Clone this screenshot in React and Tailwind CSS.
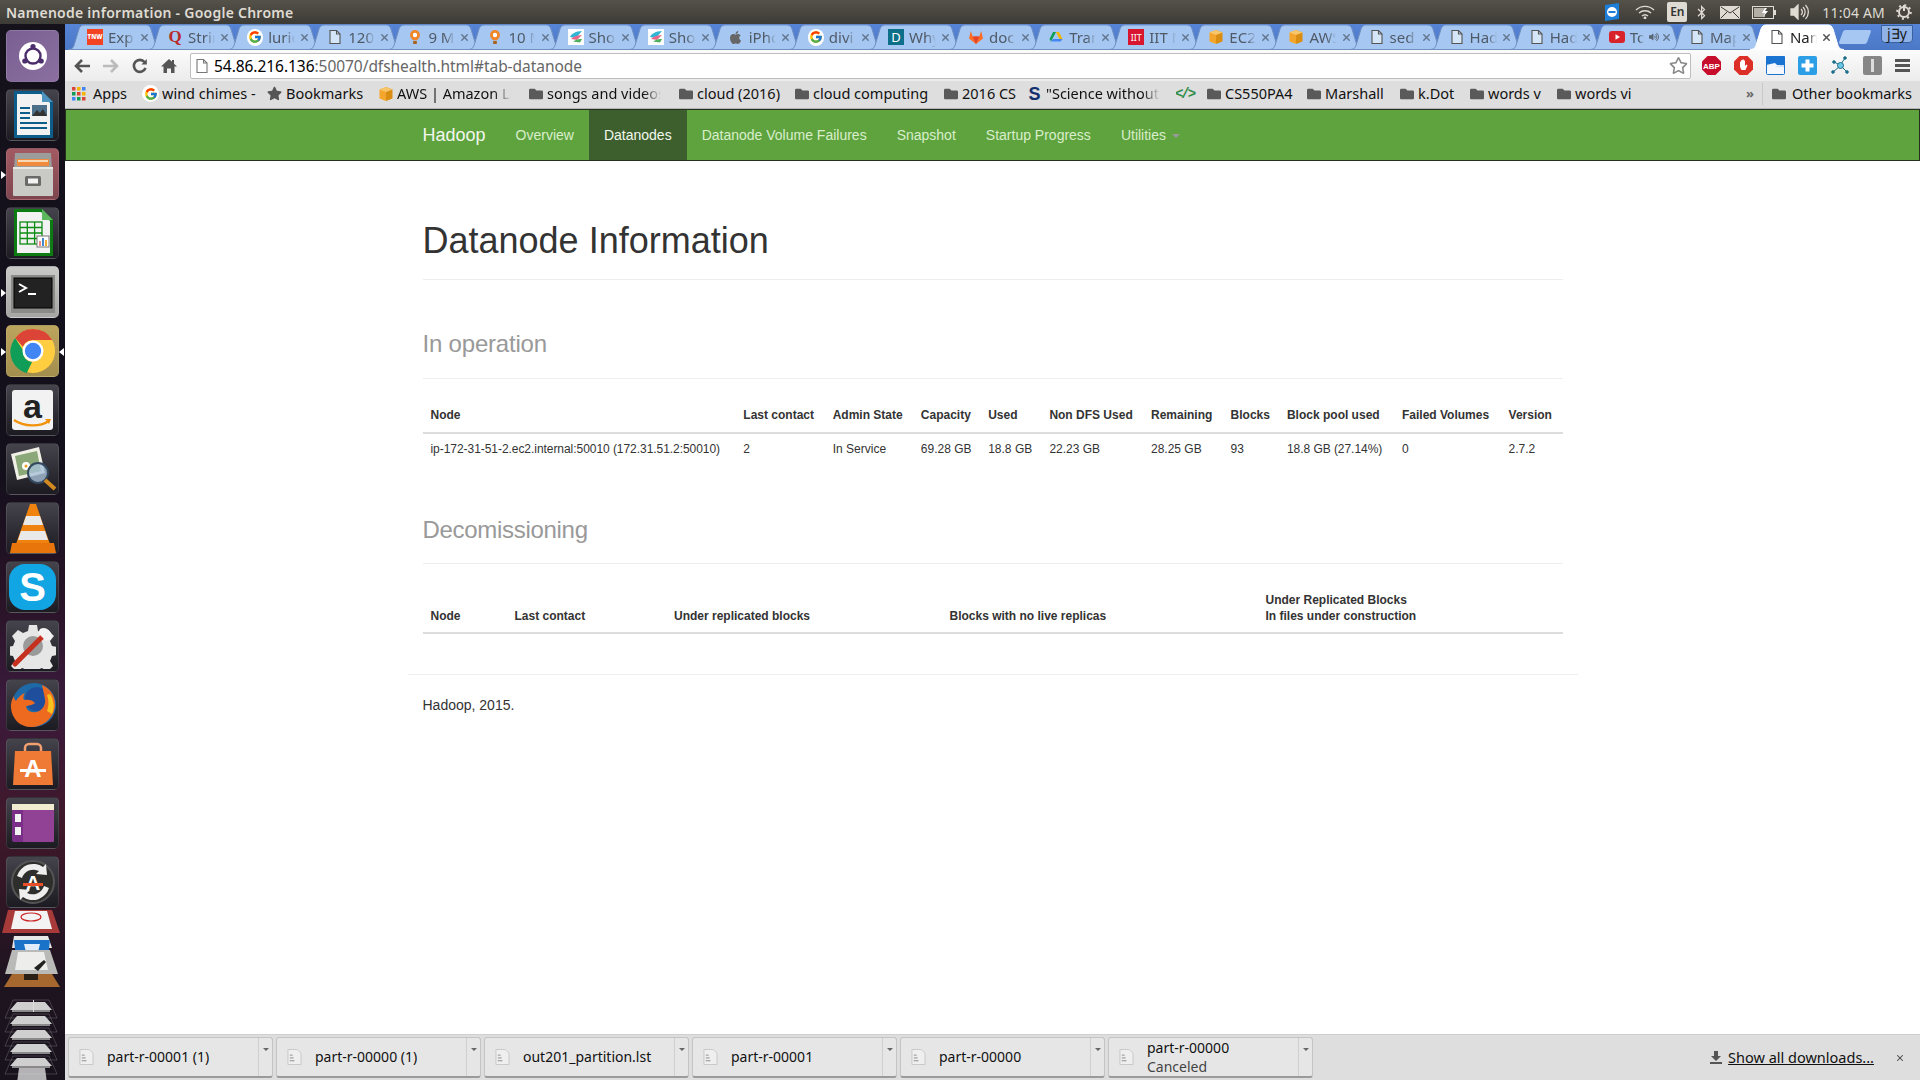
import React from "react";
import { FcGoogle } from "react-icons/fc";
import { FaApple, FaFolder, FaStar, FaRegStar, FaBluetoothB, FaVolumeUp } from "react-icons/fa";
import { X } from "lucide-react";

const Doc = ({ c = "#555" }) => (
  <svg width="16" height="16" viewBox="0 0 16 16" fill="none">
    <path d="M3 1.500h6.500L13 5v9.500H3z" fill="#fff" fillOpacity=".55" stroke={c} strokeWidth="1.100" />
    <path d="M9.500 1.500V5H13" stroke={c} strokeWidth="1.100" />
  </svg>
);
const G = () => (
  <span className="flex h-[17px] w-[17px] items-center justify-center rounded-full bg-white">
    <FcGoogle size={14} />
  </span>
);
const Pin = () => (
  <svg width="16" height="16" viewBox="0 0 16 16">
    <path d="M8 1a5 5 0 0 0-5 5c0 2.600 2 3.800 3 5.200h4C11 9.800 13 8.600 13 6a5 5 0 0 0-5-5z" fill="#f0862c" />
    <circle cx="8" cy="6" r="2.200" fill="#fff" />
    <rect x="6.200" y="12" width="3.600" height="3" fill="#a9631f" />
  </svg>
);
const Shoe = () => (
  <svg width="16" height="16" viewBox="0 0 16 16">
    <rect width="16" height="16" fill="#fff" />
    <path d="M14 2C8 2 3 5 2 8l6 1z" fill="#33b5d6" />
    <path d="M14 6C10 6 6 7 3 10l6 1z" fill="#e66a8a" />
    <path d="M14 10c-3 0-6 .5-9 2.500l7 1z" fill="#4fae5a" />
  </svg>
);
const Aws = () => (
  <svg width="16" height="16" viewBox="0 0 16 16">
    <path d="M8 1l6.500 2.500v9L8 15z" fill="#d98e13" />
    <path d="M8 1L1.500 3.500v9L8 15z" fill="#f3a62b" />
    <path d="M1.500 3.500L8 6l6.500-2.500L8 1z" fill="#f7c66a" />
  </svg>
);
const Drive = () => (
  <svg width="16" height="16" viewBox="0 0 16 16">
    <path d="M8 3l3 0 3.500 7-3 0z" fill="#f4b400" />
    <path d="M8 3L5 3 1.500 10l1.500 2.500z" fill="#0f9d58" />
    <path d="M3 12.500h9.500l2-2.500H5z" fill="#4285f4" />
  </svg>
);
const favs = {
  tnw: <span className="flex h-4 w-4 items-center justify-center bg-[#f44322] text-[6px] font-black leading-none text-white">TNW</span>,
  q: <span className="font-['Liberation_Serif',serif] text-[17px] font-bold leading-4 text-[#b92b27]">Q</span>,
  g: <G />,
  doc: <Doc />,
  pin: <Pin />,
  shoe: <Shoe />,
  apple: <FaApple size={15} color="#666" />,
  d: <span className="flex h-4 w-4 items-center justify-center bg-[#0d6f8a] text-[13px] leading-none text-white">D</span>,
  fox: (
    <svg width="16" height="16" viewBox="0 0 16 16">
      <path d="M8 15L1 9.500 2.800 2l2 5.500h6.400l2-5.500L15 9.500z" fill="#fc6d26" />
      <path d="M8 15L4.800 7.500h6.400z" fill="#e24329" />
    </svg>
  ),
  drive: <Drive />,
  iit: <span className="flex h-4 w-4 items-center justify-center bg-[#d8162f] text-[9px] leading-none text-white">IIT</span>,
  aws: <Aws />,
  yt: (
    <svg width="16" height="16" viewBox="0 0 16 16">
      <rect y="2" width="16" height="12" rx="3" fill="#d8232a" />
      <path d="M6.500 5.200v5.600L11 8z" fill="#fff" />
    </svg>
  ),
};

const tabs = [
  ["tnw", "Exp"], ["q", "Strin"], ["g", "lurio"], ["doc", "120"], ["pin", "9 M"], ["pin", "10 M"],
  ["shoe", "Sho"], ["shoe", "Sho"], ["apple", "iPho"], ["g", "divi"], ["d", "Why"], ["fox", "doc"],
  ["drive", "Tran"], ["iit", "IIT M"], ["aws", "EC2"], ["aws", "AWS"], ["doc", "sed"], ["doc", "Had"],
  ["doc", "Had"], ["yt", "To"], ["doc", "Map"],
];

const TabShape = ({ active }) => (
  <svg className="absolute -left-[7px] top-0" width="94" height="26" viewBox="0 0 94 26">
    <path
      d="M0 25.500c3 0 5-1 6-4L11 5c.8-2.500 2.500-4 5-4h62c2.500 0 4.200 1.500 5 4l5 16.500c1 3 3 4 6 4z"
      fill={active ? "#ffffff" : "#a5c7f2"}
      stroke={active ? "#ffffff" : "#6f8fc0"}
      strokeWidth="1"
    />
  </svg>
);

const Tab = ({ icon, title, active, speaker }) => (
  <div className={active ? "relative z-10 h-[26px] w-[80.100px] shrink-0" : "relative h-[26px] w-[80.100px] shrink-0"}>
    <TabShape active={active} />
    <div className="relative flex h-[26px] items-center pl-3 pr-[5px]">
      <span className="flex h-4 w-4 shrink-0 items-center justify-center">{favs[icon]}</span>
      <span
        className={
          active
            ? "ml-[5px] w-[27px] overflow-hidden whitespace-nowrap text-[15px] leading-5 text-[#222] [mask-image:linear-gradient(to_right,#000_65%,transparent)]"
            : speaker
            ? "ml-[5px] w-[14px] overflow-hidden whitespace-nowrap text-[15px] leading-5 text-[#505a66] [mask-image:linear-gradient(to_right,#000_65%,transparent)]"
            : "ml-[5px] w-[27px] overflow-hidden whitespace-nowrap text-[15px] leading-5 text-[#505a66] [mask-image:linear-gradient(to_right,#000_65%,transparent)]"
        }
      >
        {title}
      </span>
      {speaker && <FaVolumeUp size={10} color="#5a6573" className="ml-[5px] shrink-0" />}
      <span className="ml-auto flex shrink-0 items-center">
        <X size={11} strokeWidth={3.200} color={active ? "#555" : "#66788f"} />
      </span>
    </div>
  </div>
);

const bookmarks = [
  { w: "w-[124px]", icon: "g", t: "wind chimes -" },
  { w: "w-[111px]", icon: "star", t: "Bookmarks" },
  { w: "w-[150px]", icon: "aws", t: "AWS | Amazon Li", fade: true },
  { w: "w-[150px]", icon: "f", t: "songs and videos", fade: true },
  { w: "w-[116px]", icon: "f", t: "cloud (2016)" },
  { w: "w-[149px]", icon: "f", t: "cloud computing" },
  { w: "w-[84px]", icon: "f", t: "2016 CS" },
  { w: "w-[150px]", icon: "s", t: "\"Science without", fade: true },
  { w: "w-[29px]", icon: "code", t: "" },
  { w: "w-[100px]", icon: "f", t: "CS550PA4" },
  { w: "w-[93px]", icon: "f", t: "Marshall" },
  { w: "w-[70px]", icon: "f", t: "k.Dot" },
  { w: "w-[87px]", icon: "f", t: "words v" },
  { w: "w-[100px]", icon: "f", t: "words vi" },
];

const Apps = () => (
  <svg width="14" height="14" viewBox="0 0 14 14">
    {[0, 5, 10].map((y, r) =>
      [0, 5, 10].map((x, c) => (
        <rect key={`${r}${c}`} x={x} y={y} width="3.500" height="3.500"
          fill={["#db4437", "#f4b400", "#4285f4", "#0f9d58", "#db4437", "#f4b400", "#4285f4", "#0f9d58", "#db4437"][r * 3 + c]} />
      ))
    )}
  </svg>
);

const bmIcon = (k) => {
  if (k === "g") return <G />;
  if (k === "star") return <FaStar size={15} color="#555" />;
  if (k === "aws") return <Aws />;
  if (k === "f") return <FaFolder size={14} color="#5a5a5a" />;
  if (k === "s") return <span className="font-['Liberation_Sans',sans-serif] text-[18px] font-black leading-4 text-[#14306e]">S</span>;
  if (k === "code") return <span className="font-['Liberation_Mono',monospace] text-[14px] font-bold leading-4 tracking-[-2px] text-[#2e8b45]">&lt;/&gt;</span>;
  return null;
};

/* ---- launcher ---- */
const Tile = ({ bg, left, right, children }) => (
  <div className={`relative h-[52px] w-[53px] shrink-0 overflow-visible rounded-[5px] border border-white/10 ${bg}`}>
    {left && <span className="absolute -left-[6px] top-[22px] h-0 w-0 border-y-[4px] border-l-[5px] border-y-transparent border-l-white" />}
    {right && <span className="absolute -right-[6px] top-[22px] h-0 w-0 border-y-[4px] border-r-[5px] border-y-transparent border-r-white" />}
    <div className="flex h-full w-full items-center justify-center">{children}</div>
  </div>
);
const darkTile = "bg-gradient-to-b from-[#45444c] to-[#1d1b22]";

const ChromeLogo = ({ s = 46 }) => (
  <svg width={s} height={s} viewBox="0 0 48 48">
    <circle cx="24" cy="24" r="23" fill="#ffcd40" />
    <path d="M24 1a23 23 0 0 1 20 11.500H24a11.500 11.500 0 0 0-10.500 7L5.400 10.500A23 23 0 0 1 24 1z" fill="#db4437" />
    <path d="M5.400 10.500L14 24a10 10 0 0 0 9 11.500L17.500 47A23 23 0 0 1 5.400 10.500z" fill="#0f9d58" />
    <circle cx="24" cy="24" r="11" fill="#fff" />
    <circle cx="24" cy="24" r="8.500" fill="#4285f4" />
  </svg>
);

const launcher = [
  { bg: "bg-gradient-to-br from-[#7a5f92] to-[#8a6fa0]", el: (
    <svg width="40" height="40" viewBox="0 0 40 40">
      <circle cx="20" cy="20" r="14" fill="#fff" />
      <circle cx="20" cy="20" r="7.500" fill="none" stroke="#4b2e6b" strokeWidth="2.400" />
      <circle cx="20" cy="10.500" r="2.600" fill="#4b2e6b" /><circle cx="11.800" cy="25" r="2.600" fill="#4b2e6b" /><circle cx="28.200" cy="25" r="2.600" fill="#4b2e6b" />
    </svg>) },
  { bg: darkTile, el: (
    <svg width="44" height="50" viewBox="0 0 44 50">
      <path d="M3 1h28l11 11v36H3z" fill="#0d5d8a" />
      <path d="M6 4h24l9 9v32H6z" fill="#f2f2f2" />
      <path d="M31 1l11 11H31z" fill="#4d93bd" />
      <rect x="9" y="17" width="10" height="2" fill="#0d5d8a" /><rect x="9" y="22" width="10" height="2" fill="#0d5d8a" /><rect x="9" y="27" width="10" height="2" fill="#0d5d8a" />
      <rect x="21" y="15" width="15" height="11" fill="#4c6f8a" /><path d="M21 26l5-6 3 3 3-4 4 7z" fill="#333" />
      <rect x="9" y="32" width="27" height="2" fill="#0d5d8a" /><rect x="9" y="37" width="27" height="2" fill="#0d5d8a" />
    </svg>) },
  { bg: "bg-gradient-to-b from-[#a35a62] to-[#7f4650]", left: true, el: (
    <svg width="44" height="46" viewBox="0 0 44 46">
      <path d="M4 2h36l1 16H3z" fill="#9c9c9a" /><rect x="6" y="8" width="32" height="7" fill="#f08a3c" /><rect x="7" y="9" width="30" height="2" fill="#f7d9b5" />
      <rect x="2" y="16" width="40" height="29" rx="1" fill="#c9c9c6" /><rect x="2" y="16" width="40" height="2" fill="#e8e8e6" />
      <rect x="14" y="25" width="16" height="10" rx="1.500" fill="#6a6a68" /><rect x="17" y="27.500" width="10" height="5" fill="#f2f2f2" />
    </svg>) },
  { bg: darkTile, el: (
    <svg width="44" height="50" viewBox="0 0 44 50">
      <path d="M3 1h28l11 11v36H3z" fill="#0c7c12" />
      <path d="M6 4h24l9 9v32H6z" fill="#f2f2f2" />
      <path d="M31 1l11 11H31z" fill="#5cb85c" />
      <g fill="none" stroke="#0c8c12" strokeWidth="1.300"><rect x="9" y="14" width="22" height="22" /><path d="M9 19.500h22M9 25h22M9 30.500h22M16.300 14v22M23.600 14v22" /></g>
      <rect x="26" y="28" width="12" height="11" fill="#fff" stroke="#777" /><rect x="28" y="33" width="2" height="5" fill="#e88" /><rect x="31" y="30" width="2" height="8" fill="#48c" /><rect x="34" y="32" width="2" height="6" fill="#ea3" />
    </svg>) },
  { bg: "bg-gradient-to-b from-[#c8c8c6] to-[#a5a5a3]", left: true, el: (
    <svg width="44" height="38" viewBox="0 0 44 38" className="mt-[4px]">
      <rect x="0" y="0" width="44" height="38" fill="#8a8a88" /><rect x="3" y="3" width="38" height="30" fill="#222222" stroke="#000" />
      <path d="M8 9l7 4-7 4" fill="none" stroke="#fff" strokeWidth="2" /><rect x="17" y="18" width="8" height="2" fill="#fff" />
    </svg>) },
  { bg: "bg-gradient-to-b from-[#bca55d] to-[#a38e4e]", left: true, right: true, el: <ChromeLogo s={46} /> },
  { bg: darkTile, el: (
    <div className="relative flex h-[40px] w-[41px] flex-col items-center rounded-[3px] bg-[#f2f2f2]">
      <span className="font-['Liberation_Sans',sans-serif] text-[34px] font-bold leading-[32px] text-[#222]">a</span>
      <svg className="absolute bottom-[2px] left-[1px]" width="39" height="10" viewBox="0 0 39 10">
        <path d="M1 2c10 7 26 7 35 1" fill="none" stroke="#f2920c" strokeWidth="2.200" /><path d="M32 1l6 0-2 5z" fill="#f2920c" />
      </svg>
    </div>) },
  { bg: darkTile, el: (
    <svg width="48" height="46" viewBox="0 0 48 46">
      <path d="M2 8L30 1l6 26-28 7z" fill="#f0f0e6" /><path d="M6 10L28 5l4 20-22 5z" fill="#8aa878" />
      <circle cx="17" cy="20" r="4" fill="#fff" /><circle cx="17" cy="20" r="1.500" fill="#e8a020" />
      <circle cx="29" cy="27" r="10" fill="#a8c0d8" fillOpacity=".8" stroke="#34495e" strokeWidth="2" />
      <path d="M36 34l10 9" stroke="#d08a20" strokeWidth="4" />
    </svg>) },
  { bg: darkTile, el: (
    <svg width="46" height="50" viewBox="0 0 46 50">
      <path d="M20 1h6l14 40H6z" fill="#f08210" /><path d="M16 13h14l3 9H13zM11 28h24l3 9H8z" fill="#e9e9e9" />
      <path d="M2 40h42l2 10H0z" fill="#e8740c" />
    </svg>) },
  { bg: darkTile, el: (
    <div className="flex h-[46px] w-[47px] items-center justify-center rounded-[16px] bg-[#12a5e3]">
      <span className="font-['Liberation_Sans',sans-serif] text-[40px] font-bold leading-none text-white">S</span>
    </div>) },
  { bg: darkTile, el: (
    <svg width="46" height="46" viewBox="0 0 46 46">
      <path d="M19 2h8l1 6 5 2 5-3 6 6-4 5 2 5 5 1v8l-5 1-2 5 3 5-6 6-5-4-5 2-1 5h-8l-1-5-5-2-5 4-6-6 4-5-2-5-5-1v-8l5-1 2-5-3-5 6-6 5 3 5-2z" fill="#e6e6e6" />
      <circle cx="23" cy="23" r="10" fill="#9a9a9a" />
      <path d="M5 41L32 14" stroke="#c5301f" strokeWidth="5" strokeLinecap="round" />
      <path d="M30 6a8 8 0 0 1 11 10l-5 2-8-8z" fill="#f2f2f2" />
    </svg>) },
  { bg: darkTile, el: (
    <svg width="46" height="46" viewBox="0 0 46 46">
      <circle cx="24" cy="23" r="22" fill="#1e6aa8" />
      <circle cx="27" cy="17" r="12" fill="#1f4f9c" />
      <path d="M32 3c10 4 14 14 13 22-2 12-12 20-24 20C10 45 2 37 1 26c-.5-5 1-9 3-12 0 3 1 4 2 5 2-4 6-7 9-8-2 3-2 5-1 7 4-1 9 0 11 3-2 2-7 3-9 3 0 4 5 7 10 6 6-1 10-7 9-13-1-5-2-10-3-14z" fill="#ee6a1f" />
      <path d="M40 12c4 6 5 14 2 20l-5-3c2-5 2-11 0-16z" fill="#f9c11e" />
    </svg>) },
  { bg: darkTile, el: (
    <svg width="44" height="46" viewBox="0 0 44 46">
      <path d="M14 12V7a4 4 0 0 1 4-4h8a4 4 0 0 1 4 4v5" fill="none" stroke="#f2a070" strokeWidth="2.500" />
      <path d="M4 10h36l2 34H2z" fill="#ee7a35" />
      <text x="22" y="36" textAnchor="middle" fontFamily="'Liberation Sans',sans-serif" fontWeight="700" fontSize="24" fill="#fff">A</text>
      <rect x="9" y="28" width="26" height="3" fill="#fff" />
    </svg>) },
  { bg: darkTile, el: (
    <svg width="46" height="40" viewBox="0 0 46 40">
      <rect x="2" y="1" width="42" height="38" rx="2" fill="#7b2e88" />
      <rect x="2" y="1" width="42" height="6" fill="#f0ecd0" />
      <rect x="5" y="11" width="6" height="8" fill="#f2f2f2" /><rect x="5" y="24" width="6" height="8" fill="#f2f2f2" />
      <rect x="13" y="7" width="31" height="32" fill="#a0509f" fillOpacity=".6" />
    </svg>) },
  { bg: darkTile, el: (
    <svg width="46" height="46" viewBox="0 0 46 46">
      <circle cx="23" cy="23" r="21" fill="#2e2e2c" stroke="#555" strokeWidth="2" />
      <path d="M7 17a17 17 0 0 1 26-9l3-3 1 11-11-1 3-3a12 12 0 0 0-17 7z" fill="#eee" />
      <path d="M39 29a17 17 0 0 1-26 9l-3 3-1-11 11 1-3 3a12 12 0 0 0 17-7z" fill="#eee" />
      <text x="23" y="31" textAnchor="middle" fontFamily="'Liberation Sans',sans-serif" fontWeight="700" fontSize="20" fill="#fff">A</text>
      <rect x="13" y="24" width="20" height="3" fill="#e8502a" />
    </svg>) },
];

const Pile = () => (
  <svg className="-ml-[6px] block shrink-0" width="65" height="175" viewBox="0 0 65 175">
    <path d="M8 2h44l8 23H2z" fill="#a83a3a" />
    <path d="M15 3h32l5 18H11z" fill="#f3f3f3" />
    <ellipse cx="31" cy="9" rx="10" ry="4" fill="none" stroke="#c22" strokeWidth="1.200" />
    <path d="M14 28h34l4 12H12z" fill="#e8e8e8" />
    <path d="M14 32h36l-2 18H16z" fill="#1b73c9" />
    <path d="M24 36h16l-2 8H26z" fill="#dfeefa" />
    <path d="M12 42h38l8 24H5z" fill="#b9b9b7" />
    <path d="M18 44h26l4 18H15z" fill="#ededeb" />
    <path d="M34 60l10-8 2 2-8 9z" fill="#222" />
    <path d="M12 66h40l8 13H4z" fill="#a6682e" />
    <rect x="24" y="66" width="14" height="6" fill="#2a2016" />
    {[92, 106, 120, 134, 148].map((y, i) => (
      <g key={i}>
        <path d={`M13 ${y}h36l8 18H5z`} fill="none" stroke="#ffffff" strokeOpacity=".18" />
        <path d={`M17 ${y + 2}h28l7 8H10z`} fill="#cfcfcf" />
        <path d={`M12 ${y + 10}h38v2H12z`} fill="#8a8a8a" />
      </g>
    ))}
    <rect x="33" y="92" width="1" height="12" fill="#ddd" />
    <path d="M19 160h26l2 15H17z" fill="#e8e8e8" opacity=".75" />
  </svg>
);

const thCls = "p-2 text-left align-bottom font-bold whitespace-nowrap border-b-2 border-[#ddd]";
const tdCls = "px-2 py-[7px] text-left whitespace-nowrap";

const Chip = ({ name, sub }) => (
  <div className="flex h-[41px] w-[205px] shrink-0 rounded-[3px] border border-[#c4c4c4] border-b-[#9a9a9a] border-b-2 bg-[#e6e6e6]">
    <div className="flex min-w-0 flex-1 items-center pl-[10px]">
      <svg width="15" height="18" viewBox="0 0 16 18" className="shrink-0">
        <path d="M1 1h10l4 4v12H1z" fill="#efefef" stroke="#c8c8c8" />
        <path d="M3 7h3M3 10h4M3 13h5" stroke="#8a8a8a" strokeWidth="1" />
      </svg>
      <div className={sub ? "ml-[13px] font-['Noto_Sans','Open_Sans',sans-serif] text-[14px] leading-[19px] text-[#111]" : "ml-[13px] font-['Noto_Sans','Open_Sans',sans-serif] text-[14px] leading-5 text-[#111]"}>
        <div>{name}</div>
        {sub && <div className="text-[#444]">{sub}</div>}
      </div>
    </div>
    <div className="flex w-[14px] shrink-0 justify-center border-l border-[#cfcfcf] pt-[10px]">
      <span className="h-0 w-0 border-x-[3px] border-t-[3px] border-x-transparent border-t-[#666]" />
    </div>
  </div>
);

export default function App() {
  return (
    <div className="flex h-[1080px] w-[1920px] flex-col overflow-hidden bg-white font-['Noto_Sans','Open_Sans',sans-serif]">
      {/* system title bar */}
      <div className="flex h-6 shrink-0 items-center justify-between bg-gradient-to-b from-[#55524a] to-[#3d3b36] pl-[6px] pr-[8px]">
        <span className="text-[14px] font-semibold tracking-[0.25px] text-[#dfdbd2]">Namenode information - Google Chrome</span>
        <div className="flex items-center text-[#dfdbd2]">
          <svg width="16" height="20" viewBox="0 0 16 20" className="mr-[15px]">
            <path d="M1 3l14-2v16L1 19z" fill="#1f7fd8" />
            <circle cx="8" cy="10" r="5" fill="#fff" /><path d="M4.500 10h7" stroke="#1f7fd8" strokeWidth="2" />
          </svg>
          <svg width="20" height="14" viewBox="0 0 20 14" fill="none" stroke="#dfdbd2" strokeWidth="1.400" className="mr-[12px]">
            <path d="M1 5a13 13 0 0 1 18 0M4 8a9 9 0 0 1 12 0M7 11a4.500 4.500 0 0 1 6 0" /><circle cx="10" cy="13" r=".7" />
          </svg>
          <span className="mr-[7px] flex h-[20px] w-[20px] items-center justify-center rounded-[2px] bg-[#dfdbd2] text-[12px] font-semibold text-[#333]">En</span>
          <FaBluetoothB size={15} className="mr-[11px]" />
          <svg width="20" height="13" viewBox="0 0 20 13" fill="#dfdbd2" className="mr-[12px]">
            <rect width="20" height="13" rx="1" /><path d="M1 1l9 6 9-6M1 12l6-6M19 12l-6-6" fill="none" stroke="#3d3b36" />
          </svg>
          <svg width="24" height="13" viewBox="0 0 24 13" className="mr-[14px]">
            <rect x=".5" y=".5" width="21" height="12" fill="none" stroke="#dfdbd2" /><rect x="2" y="2" width="11" height="9" fill="#dfdbd2" opacity=".7" /><rect x="22" y="4" width="2" height="5" fill="#dfdbd2" />
            <path d="M13 2l-3 5h3l-2 4 5-6h-3l2-3z" fill="#fff" />
          </svg>
          <svg width="20" height="16" viewBox="0 0 20 16" fill="none" stroke="#dfdbd2" strokeWidth="1.300" className="mr-[12px]">
            <path d="M1 5h3l4-4v14l-4-4H1z" fill="#dfdbd2" /><path d="M11 5a4 4 0 0 1 0 6M13 3a7 7 0 0 1 0 10M15.500 1a10 10 0 0 1 0 14" />
          </svg>
          <span className="mr-[11px] text-[14px] tracking-[0.2px]">11:04 AM</span>
          <svg width="16" height="16" viewBox="0 0 16 16" fill="none" stroke="#dfdbd2">
            <circle cx="8" cy="8" r="5" strokeWidth="2" />
            <circle cx="8" cy="8" r="6.800" strokeWidth="2" strokeDasharray="2 3.340" />
            <path d="M8 1v6" strokeWidth="2" />
          </svg>
        </div>
      </div>

      <div className="flex min-h-0 flex-1">
        {/* launcher */}
        <div className="flex w-[65px] shrink-0 flex-col overflow-hidden bg-[linear-gradient(180deg,#15121c_0%,#130f1b_42%,#2a1428_55%,#3a1a3c_64%,#40182a_76%,#1f1420_90%,#17121c_100%)] pl-[6px] pt-[6px]">
          <div className="flex flex-col gap-[7px]">
            {launcher.map((t, i) => (
              <Tile key={i} bg={t.bg} left={t.left} right={t.right}>{t.el}</Tile>
            ))}
          </div>
          <Pile />
        </div>

        {/* browser */}
        <div className="flex min-w-0 flex-1 flex-col">
          {/* tabs */}
          <div className="relative flex h-[26px] shrink-0 items-end bg-gradient-to-b from-[#5684d6] to-[#4b78c6] pl-[10px]">
            {tabs.map((t, i) => (
              <Tab key={i} icon={t[0]} title={t[1]} speaker={i === 19} />
            ))}
            <Tab icon="doc" title="Nam" active />
            <div className="ml-[4px] h-[14px] w-[28px] -skew-x-[20deg] self-center rounded-[2px] bg-[#a5c7f2]" />
            <div className="absolute right-[7px] top-[1px] flex h-[18px] w-[32px] items-center justify-center rounded-b-[4px] border border-[#39609f] bg-[#8fb3e8] text-[14px] leading-none text-[#1b1b1b]">j∃y</div>
          </div>

          {/* toolbar */}
          <div className="flex h-[31px] shrink-0 items-center bg-gradient-to-b from-[#fbfbfb] to-[#ececec]">
            <svg width="18" height="16" viewBox="0 0 18 16" fill="none" stroke="#555" strokeWidth="2.600" className="ml-[8px]">
              <path d="M17 8H3M9 2L3 8l6 6" />
            </svg>
            <svg width="18" height="16" viewBox="0 0 18 16" fill="none" stroke="#bbb" strokeWidth="2.600" className="ml-[11px]">
              <path d="M1 8h14M9 2l6 6-6 6" />
            </svg>
            <svg width="16" height="16" viewBox="0 0 16 16" fill="none" stroke="#555" strokeWidth="2.600" className="ml-[12px]">
              <path d="M13.500 10a6 6 0 1 1-1-6" /><path d="M14.800 1v5.400H9.400z" fill="#555" stroke="none" />
            </svg>
            <svg width="16" height="16" viewBox="0 0 16 16" fill="#555" className="ml-[13px]">
              <path d="M8 1L0 8.500h2.500V15H6v-4.500h4V15h3.500V8.500H16L13 5.700V2h-2v1.800z" />
            </svg>
            <div className="ml-[13px] flex h-[26px] w-[1501px] items-center rounded-[2px] border border-[#bdbdbd] bg-white pl-[3px] pr-[2px]">
              <Doc c="#777" />
              <span className="ml-[4px] text-[15.500px] leading-5 tracking-[-0.05px] text-[#000]">54.86.216.136<span className="text-[#666]">:50070/dfshealth.html#tab-datanode</span></span>
              <FaRegStar size={19} color="#888" className="ml-auto" />
            </div>
            <div className="flex flex-1 items-center justify-between pl-[11px] pr-[10px]">
              <svg width="19" height="19" viewBox="0 0 19 19">
                <path d="M5.500 0h8L19 5.500v8L13.500 19h-8L0 13.500v-8z" fill="#c70d2c" />
                <text x="9.500" y="12.800" textAnchor="middle" fontFamily="'Liberation Sans',sans-serif" fontWeight="700" fontSize="8" fill="#fff">ABP</text>
              </svg>
              <svg width="19" height="19" viewBox="0 0 19 19">
                <path d="M5.500 0h8L19 5.500v8L13.500 19h-8L0 13.500v-8z" fill="#dc2f27" />
                <path d="M6 9V5.500h1.200V8.500V4h1.300v4.500V3.500h1.300v5V4.500H11v5.500l1.300-1.500 1.200.8-2 4.700H7.500L6 11z" fill="#fff" />
              </svg>
              <svg width="19" height="19" viewBox="0 0 19 19">
                <rect x=".5" y=".5" width="18" height="18" rx="1" fill="#f4f8fc" stroke="#1a73d0" />
                <path d="M0 1a1 1 0 0 1 1-1h17a1 1 0 0 1 1 1v8h-8L9 7 0 9z" fill="#1a73d0" />
                <path d="M9 11l6-2h3v2z" fill="#cfe2f5" />
              </svg>
              <svg width="19" height="19" viewBox="0 0 19 19">
                <rect width="19" height="19" rx="2" fill="#2b9ee6" />
                <path d="M7.500 3.500h4v4h4v4h-4v4h-4v-4h-4v-4h4z" fill="#fff" />
              </svg>
              <svg width="19" height="19" viewBox="0 0 19 19" fill="none" stroke="#1a6f8a" strokeWidth="1">
                <path d="M3 6l6 3M14 2L10 8M2 16l6-5M11 11l5 5" />
                <circle cx="9.500" cy="9.500" r="3" fill="#6cc7e3" />
                <circle cx="3" cy="6" r="1.300" fill="#1a6f8a" /><circle cx="14" cy="2" r="1.300" fill="#1a6f8a" /><circle cx="2" cy="16" r="1.300" fill="#1a6f8a" /><circle cx="16" cy="16" r="1.300" fill="#1a6f8a" />
              </svg>
              <svg width="19" height="19" viewBox="0 0 19 19">
                <rect width="19" height="19" rx="2" fill="#868686" /><rect x="8" y="3" width="3" height="13" fill="#ddd" />
              </svg>
              <svg width="15" height="14" viewBox="0 0 15 14" fill="#555">
                <rect width="15" height="3" y="0" /><rect width="15" height="3" y="5" /><rect width="15" height="3" y="10" />
              </svg>
            </div>
          </div>

          {/* bookmarks */}
          <div className="flex h-[28px] shrink-0 items-center border-b border-[#b5b5b5] bg-[#dedede] pb-[2px] pl-[7px] text-[14.500px] text-[#111]">
            <div className="flex w-[70px] shrink-0 items-center">
              <Apps />
              <span className="ml-[7px]">Apps</span>
            </div>
            {bookmarks.map((b, i) => (
              <div key={i} className={`flex shrink-0 items-center overflow-hidden ${b.w}`}>
                <span className="flex w-[17px] shrink-0 items-center justify-center">{bmIcon(b.icon)}</span>
                {b.t && (
                  <span className={b.fade ? "ml-[3px] w-[114px] overflow-hidden whitespace-nowrap [mask-image:linear-gradient(to_right,#000_85%,transparent)]" : "ml-[3px] whitespace-nowrap"}>
                    {b.t}
                  </span>
                )}
              </div>
            ))}
            <span className="ml-[91px] text-[13px] font-bold text-[#666]">»</span>
            <span className="ml-[8px] h-[22px] w-px bg-[#c8c8c8]" />
            <span className="ml-[8px] flex w-[17px] shrink-0 justify-center"><FaFolder size={14} color="#5a5a5a" /></span>
            <span className="ml-[4px] whitespace-nowrap">Other bookmarks</span>
          </div>

          {/* page */}
          <div className="flex min-h-0 flex-1 flex-col bg-white font-['Liberation_Sans',Arial,sans-serif] text-[14px] text-[#333]">
            <nav className="h-[52px] shrink-0 border border-[#26301f] bg-[#5fa33e]">
              <div className="mx-auto flex h-[50px] w-[1140px] items-stretch text-[#d9eecb]">
                <span className="flex items-center pr-[15px] text-[18px] text-[#f2f7ee]">Hadoop</span>
                <span className="flex items-center px-[15px]">Overview</span>
                <span className="flex items-center bg-[#3d5f2d] px-[15px] text-[#f2f7ee]">Datanodes</span>
                <span className="flex items-center px-[15px]">Datanode Volume Failures</span>
                <span className="flex items-center px-[15px]">Snapshot</span>
                <span className="flex items-center px-[15px]">Startup Progress</span>
                <span className="flex items-center px-[15px]">
                  Utilities
                  <span className="ml-[6px] mt-[2px] h-0 w-0 border-x-[4px] border-t-[4px] border-x-transparent border-t-[#999]" />
                </span>
              </div>
            </nav>

            <div className="mx-auto w-[1140px]">
              <div className="mt-[60px] border-b border-[#eee] pb-[18px]">
                <h1 className="text-[36px] leading-[39.600px] text-[#333]">Datanode Information</h1>
              </div>
              <div className="mt-[51px] border-b border-[#eee] pb-[21px]">
                <h2 className="text-[24px] leading-[26.400px] tracking-[-0.2px] text-[#999]">In operation</h2>
              </div>
              <table className="mt-[20px] w-full table-fixed border-collapse text-[12px] leading-[17px] text-[#333]">
                <thead>
                  <tr>
                    <th className={`${thCls} w-[312.800px]`}>Node</th><th className={`${thCls} w-[89.400px]`}>Last contact</th><th className={`${thCls} w-[88.100px]`}>Admin State</th>
                    <th className={`${thCls} w-[67.400px]`}>Capacity</th><th className={`${thCls} w-[61.200px]`}>Used</th><th className={`${thCls} w-[101.600px]`}>Non DFS Used</th>
                    <th className={`${thCls} w-[79.600px]`}>Remaining</th><th className={`${thCls} w-[56.400px]`}>Blocks</th><th className={`${thCls} w-[115px]`}>Block pool used</th>
                    <th className={`${thCls} w-[106.600px]`}>Failed Volumes</th><th className={`${thCls} w-[61.900px]`}>Version</th>
                  </tr>
                </thead>
                <tbody>
                  <tr>
                    <td className={`${tdCls} tracking-[-0.05px]`}>ip-172-31-51-2.ec2.internal:50010 (172.31.51.2:50010)</td><td className={tdCls}>2</td><td className={tdCls}>In Service</td>
                    <td className={tdCls}>69.28 GB</td><td className={tdCls}>18.8 GB</td><td className={tdCls}>22.23 GB</td>
                    <td className={tdCls}>28.25 GB</td><td className={tdCls}>93</td><td className={`${tdCls} tracking-[-0.05px]`}>18.8 GB (27.14%)</td>
                    <td className={tdCls}>0</td><td className={tdCls}>2.7.2</td>
                  </tr>
                </tbody>
              </table>
              <div className="mt-[52px] border-b border-[#eee] pb-[20px]">
                <h2 className="text-[24px] leading-[26.400px] tracking-[-0.3px] text-[#999]">Decomissioning</h2>
              </div>
              <table className="mt-[20px] w-full table-fixed border-collapse text-[12px] leading-[16px] text-[#333]">
                <thead>
                  <tr>
                    <th className={`${thCls} w-[84px]`}>Node</th><th className={`${thCls} w-[159.500px]`}>Last contact</th><th className={`${thCls} w-[275.500px]`}>Under replicated blocks</th>
                    <th className={`${thCls} w-[316px]`}>Blocks with no live replicas</th>
                    <th className={`${thCls} w-[305px]`}>Under Replicated Blocks<br />In files under construction</th>
                  </tr>
                </thead>
              </table>
            </div>
            <div className="mx-auto mt-[40px] w-[1170px] border-t border-[#eee] px-[15px] pt-[20px] text-[14px] leading-5">Hadoop, 2015.</div>

            {/* downloads bar */}
            <div className="mt-auto flex h-[46px] shrink-0 items-center gap-[3px] border-t border-[#cfcfcf] bg-[#dedede] pl-[3px]">
              <Chip name="part-r-00001 (1)" />
              <Chip name="part-r-00000 (1)" />
              <Chip name="out201_partition.lst" />
              <Chip name="part-r-00001" />
              <Chip name="part-r-00000" />
              <Chip name="part-r-00000" sub="Canceled" />
              <div className="ml-auto flex items-center pr-[15px] font-['Noto_Sans','Open_Sans',sans-serif] text-[14.500px] text-[#111]">
                <svg width="12" height="13" viewBox="0 0 12 13" fill="#555"><path d="M4 0h4v5h3L6 10 1 5h3zM0 11h12v2H0z" /></svg>
                <span className="ml-[6px] underline">Show all downloads...</span>
                <X size={10} strokeWidth={2.500} color="#444" className="ml-[21px]" />
              </div>
            </div>
          </div>
        </div>
      </div>
    </div>
  );
}
